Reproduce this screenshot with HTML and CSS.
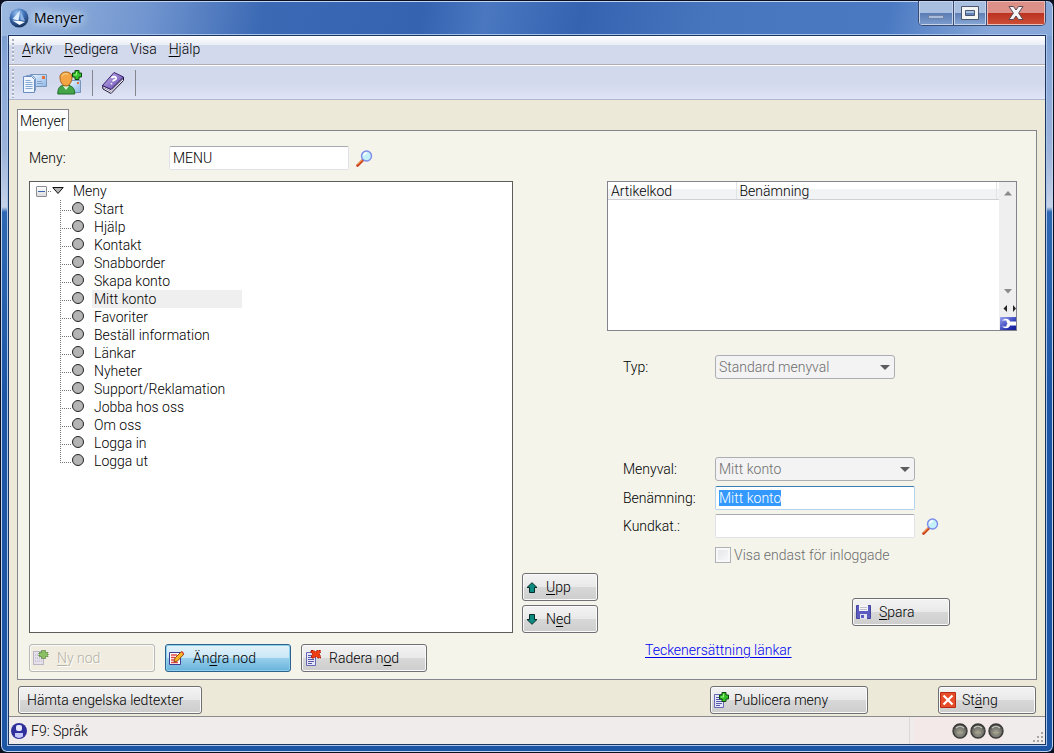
FILE: index.html
```html
<!DOCTYPE html>
<html lang="sv">
<head>
<meta charset="utf-8">
<title>Menyer</title>
<link rel="stylesheet" href="styles.css">
</head>
<body>
<svg class="defs" width="0" height="0" aria-hidden="true">
  <defs>
    <linearGradient id="gBlue" x1="0" y1="0" x2="1" y2="1"><stop offset="0" stop-color="#eaf4ff"/><stop offset="1" stop-color="#8fb8e8"/></linearGradient>
    <radialGradient id="gOrb" cx=".4" cy=".25" r=".8"><stop offset="0" stop-color="#9cc4f0"/><stop offset=".5" stop-color="#3a6cb4"/><stop offset="1" stop-color="#12284e"/></radialGradient>
    <radialGradient id="gLed" cx=".5" cy=".6" r=".6"><stop offset="0" stop-color="#a4a49a"/><stop offset=".6" stop-color="#77776f"/><stop offset="1" stop-color="#3c3c38"/></radialGradient>
    <linearGradient id="gBook" x1="0" y1="0" x2="1" y2="1"><stop offset="0" stop-color="#cdbcf0"/><stop offset="1" stop-color="#5a3da8"/></linearGradient>
    <linearGradient id="gTool" x1="0" y1="0" x2="1" y2="1"><stop offset="0" stop-color="#9aa4f0"/><stop offset=".7" stop-color="#2430b0"/><stop offset="1" stop-color="#141c90"/></linearGradient>
    <symbol id="lens" viewBox="0 0 17 17">
      <path d="M1.500 15.500 7 10" stroke="#c8401c" stroke-width="2.600" stroke-linecap="round"/>
      <path d="M1.500 14.700 6.200 10" stroke="#ffab4c" stroke-width="1"/>
      <circle cx="10.500" cy="6" r="5" fill="#c4f0fa" stroke="#7c8ce8" stroke-width="1.400"/>
      <path d="M8 5.500A3 3 0 0 1 11 3" stroke="#fff" stroke-width="1.600" fill="none"/>
    </symbol>
    <symbol id="plus" viewBox="0 0 10 10">
      <path d="M3 .5h4V3h2.500v4H7v2.500H3V7H.5V3H3z" fill="#35c22b" stroke="#0c4a0c"/>
      <path d="M4.500 2v3H2" stroke="#a4f58c" fill="none"/>
    </symbol>
    <symbol id="sheet" viewBox="0 0 12 14">
      <path d="M.5.5h9v13h-9z" fill="#e6e6fa" stroke="#6868b4"/>
      <path d="M2 3.500h6M2 5.500h6M2 7.500h6M2 9.500h6M2 11.500h4" stroke="#5a5aac"/>
    </symbol>
    <symbol id="led" viewBox="0 0 16 16">
      <circle cx="8" cy="8" r="7" fill="url(#gLed)" stroke="#3a3a38" stroke-width="1.400"/>
      <path d="M4 5A6 6 0 0 1 12 5" stroke="#c8c8c0" stroke-width="1.200" fill="none"/>
      <path d="M5 9.500h6" stroke="#a8a480"/>
    </symbol>
  </defs>
</svg>

<div class="window">
  <header class="titlebar">
    <svg class="app-icon" width="20" height="20" viewBox="0 0 20 20"><circle cx="10" cy="10" r="9.500" fill="url(#gOrb)"/><path d="M11 2.500 3.500 11l6 1.500z" fill="#dfeeff"/><path d="M11.500 2.500v9.500l4.500 1z" fill="#8db4e4"/><path d="M3.500 12.500l7.500.5 5 1-5.500 3z" fill="#f6fbff"/></svg>
    <h1 class="title">Menyer</h1>
    <div class="caption">
      <button class="cap cap-min" aria-label="Minimera"><svg width="18" height="14" viewBox="0 0 18 14"><path d="M1.500 9.500h15v3h-15z" fill="#a9bddd" stroke="#6f83a8"/></svg></button>
      <button class="cap cap-max" aria-label="Maximera"><svg width="18" height="14" viewBox="0 0 18 14"><path fill-rule="evenodd" d="M.5.500h17v13H.5zM4.500 4.500v5h9v-5z" fill="#f4f4f4" stroke="#4a5670"/></svg></button>
      <button class="cap cap-close" aria-label="Stäng fönster"><svg width="16" height="14" viewBox="0 0 16 14"><path d="M1 .5h4.500L8 4 10.500.5H15L10.600 7l4.400 6.500h-4.500L8 10l-2.500 3.500H1L5.400 7z" fill="#f6f6f6" stroke="#5a4a58"/></svg></button>
    </div>
  </header>

  <div class="client">
    <nav class="menubar">
      <button><u>A</u>rkiv</button>
      <button><u>R</u>edigera</button>
      <button>Visa</button>
      <button><u>H</u>jälp</button>
    </nav>
    <div class="toolbar">
      <button aria-label="Kopiera"><svg width="25" height="24" viewBox="0 0 25 24"><path d="M8.500 3.500h16v12h-16z" fill="url(#gBlue)" stroke="#7896bc"/><path d="M20 5h3v3h-3z" fill="#e4703c"/><path d="M15 10.500h5M15 12.500h6" stroke="#88a4c8"/><path d="M4.500 4.500h6l3 3v12h-9z" fill="#cfe0f6" stroke="#7c9cc8"/><path d="M1.500 5.500h8l3 3v13h-11z" fill="#eef5ff" stroke="#6a8cc0"/><path d="M3.500 9.500h5M3.500 11.500h7M3.500 13.500h7M3.500 15.500h7M3.500 17.500h7" stroke="#86a8d4"/></svg></button>
      <button aria-label="Ny kund"><svg width="25" height="25" viewBox="0 0 25 25"><path d="M12.500 10.500h11v12h-11z" fill="url(#gBlue)" stroke="#7896bc"/><path d="M20 12h2v2h-2z" fill="#e4703c"/><path d="M.8 24c0-6 2-8.500 6-8.500h4c4 0 7 2.500 7 8.500z" fill="#43a448" stroke="#1e6c28"/><path d="M6 16l3 4 3-4z" fill="#dff2d8"/><path d="M3 7C3 4 5.500 2 9 2s6 2 6 5c0 5-2.500 9-6 9S3 12 3 7z" fill="#f3a544" stroke="#a8641c"/><path d="M5 6.500C5.500 4 9 3 11 4.500" stroke="#ffe0a0" fill="none"/><use href="#plus" x="15" y="0" width="10" height="10"/></svg></button>
      <span class="tool-sep"></span>
      <button aria-label="Hjälpbok"><svg width="24" height="24" viewBox="0 0 24 24"><path d="M1.500 14.500 2 18l8 4.500L22.500 9.500V6L10 18.500z" fill="#fff" stroke="#1c1238"/><path d="M2.500 16.500 10 20.500 22 8" fill="none" stroke="#8884a0"/><path d="M1.500 14.500 13 1.500 22.500 6 10 18.500z" fill="url(#gBook)" stroke="#38206c"/><path d="M10.500 7.200c1-2.200 5.200-1.800 4.600.4-.5 1.500-2.600 1-3.400 2.900M10.800 12.300l-.6 1" stroke="#fff" stroke-width="1.800" fill="none"/></svg></button>
      <span class="tool-sep"></span>
    </div>

    <main class="content">
      <div class="tabs" role="tablist"><button class="tab" role="tab" aria-selected="true">Menyer</button></div>
      <section class="panel">
        <div class="lookup">
          <label for="meny">Meny:</label>
          <input id="meny" class="field" type="text" value="MENU">
          <button class="lens" aria-label="Sök meny"><svg width="17" height="17"><use href="#lens"/></svg></button>
        </div>

        <div class="tree">
          <div class="root">
            <button class="expander" aria-label="Fäll ihop"></button><span class="dots"></span>
            <svg width="12" height="8" viewBox="0 0 12 8"><path d="M.8.500h10.400L6 6.500z" fill="#b4b4b4" stroke="#111"/></svg>
            <span class="root-label">Meny</span>
          </div>
          <ul class="nodes">
            <li><span>Start</span></li>
            <li><span>Hjälp</span></li>
            <li><span>Kontakt</span></li>
            <li><span>Snabborder</span></li>
            <li><span>Skapa konto</span></li>
            <li><span class="selected">Mitt konto</span></li>
            <li><span>Favoriter</span></li>
            <li><span>Beställ information</span></li>
            <li><span>Länkar</span></li>
            <li><span>Nyheter</span></li>
            <li><span>Support/Reklamation</span></li>
            <li><span>Jobba hos oss</span></li>
            <li><span>Om oss</span></li>
            <li><span>Logga in</span></li>
            <li><span>Logga ut</span></li>
          </ul>
        </div>

        <div class="movers">
          <button class="btn"><svg width="12" height="11" viewBox="0 0 12 11"><path d="M6 .7 11 5.500H8.500v5h-5v-5H1z" fill="#0c8c80" stroke="#042c28"/></svg><span><u>U</u>pp</span></button>
          <button class="btn"><svg width="12" height="11" viewBox="0 0 12 11"><path d="M6 10.300 11 5.500H8.500v-5h-5v5H1z" fill="#0c8c80" stroke="#042c28"/></svg><span>N<u>e</u>d</span></button>
        </div>

        <div class="details">
          <div class="list">
            <table class="articles">
              <thead><tr><th class="col-code">Artikelkod</th><th>Benämning</th><th class="col-end"></th></tr></thead>
            </table>
            <div class="scroller">
              <svg class="arrow" width="8" height="5" viewBox="0 0 8 5"><path d="M4 0 8 4.500H0z" fill="#8a8a8a"/></svg>
              <svg class="arrow arrow-down" width="8" height="5" viewBox="0 0 8 5"><path d="M4 4.500 8 0H0z" fill="#8a8a8a"/></svg>
              <svg class="pager" width="16" height="13" viewBox="0 0 16 13"><path d="M7 2v7L3.500 5.500z" fill="#222"/><path d="M13 2v7l3-3.500z" fill="#222"/></svg>
              <svg width="16" height="13" viewBox="0 0 16 13"><path d="M0 0h16v13H0z" fill="url(#gTool)"/><path d="M2 3.500C5 .8 9 1.500 10 4.500h6v4h-6c-1 3-5 3.700-8 1h4.500V8l1-1.500-1-1.500V3.500z" fill="#fff"/></svg>
            </div>
          </div>

          <div class="form">
            <div class="row row-type">
              <label for="typ">Typ:</label>
              <span class="select narrow"><select id="typ" disabled><option>Standard menyval</option></select></span>
            </div>
            <div class="row row-choice">
              <label for="menyval">Menyval:</label>
              <span class="select"><select id="menyval" disabled><option>Mitt konto</option></select></span>
            </div>
            <div class="row">
              <label for="benamning">Benämning:</label>
              <input id="benamning" class="field active" type="text" value="Mitt konto">
            </div>
            <div class="row">
              <label for="kundkat">Kundkat.:</label>
              <input id="kundkat" class="field" type="text">
              <button class="lens" aria-label="Sök kundkategori"><svg width="17" height="17"><use href="#lens"/></svg></button>
            </div>
            <div class="row row-check">
              <input id="inloggade" type="checkbox" disabled><label for="inloggade">Visa endast för inloggade</label>
            </div>
          </div>
          <button class="btn save"><svg width="15" height="15" viewBox="0 0 15 15"><path d="M.5.500h14v13h-14z" fill="#5c5cc0" stroke="#46469c"/><path d="M3 0h9v6H3z" fill="#f4f4fa"/><path d="M4 2.500h7M4 4.500h7" stroke="#c0c0c8"/><path d="M4 9h7v5H4z" fill="#e4e4f0"/><path d="M5 10h3v3H5z" fill="#5c5cc0"/></svg><span><u>S</u>para</span></button>
        </div>

        <div class="node-actions">
          <button class="btn ghost" disabled><svg width="16" height="16" viewBox="0 0 16 16"><path d="M.5 1.500h10v13H.5z" fill="#e4e0ec" stroke="#8c84a0" stroke-dasharray="1 1"/><path d="M2 5h7M2 8h7M2 11h7" stroke="#b4b0b8" stroke-dasharray="1 1"/><path d="M8.500.500h4v2h2.500v4h-2.500v2h-4v-2H6v-4h2.500z" fill="#8cc064" stroke="#3c6c28" stroke-dasharray="1 1"/></svg><span><u>N</u>y nod</span></button>
          <button class="btn default"><svg width="16" height="16" viewBox="0 0 16 16"><path d="M.5 2.500h11v12H.5z" fill="#fff" stroke="#3c3c94"/><path d="M2 5h6M2 7.500h4M2 10h3M2 12.500h7" stroke="#e04848" stroke-width="1.500"/><path d="M5 12l1-4 6.500-6.500 2.500 2.500L8.500 11z" fill="#ffb428" stroke="#8c4c10"/><path d="M12 2l1-1 2.200 2.200-1 1z" fill="#e04040"/></svg><span>Än<u>d</u>ra nod</span></button>
          <button class="btn"><svg width="16" height="16" viewBox="0 0 16 16"><use href="#sheet" x="1" y="2" width="12" height="14"/><path d="M6 .5h3l1.500 1.500L12 .5h3.500v2L14 4l1.500 2v2H13l-2-1.500L9 8H6.500V6L8 4 6 2.500z" fill="#f03c10" stroke="#a01808" stroke-dasharray="2 1"/></svg><span>Radera n<u>o</u>d</span></button>
        </div>
        <p class="link-line"><a href="#lankar">Teckenersättning länkar</a></p>
      </section>

      <footer class="actions">
        <button class="btn texts">Hämta engelska ledtexter</button>
        <button class="btn publish"><svg width="15" height="16" viewBox="0 0 15 16"><use href="#sheet" x="0" y="2" width="12" height="14"/><use href="#plus" x="5" y="0" width="10" height="10"/></svg><span>Publicera meny</span></button>
        <button class="btn close"><svg width="16" height="16" viewBox="0 0 16 16"><path d="M.5.500h15v15H.5z" fill="#e84c28" stroke="#b42c14"/><path d="M3.500 3.500l9 9M12.500 3.500l-9 9" stroke="#fff" stroke-width="2.200"/></svg><span>St<u>ä</u>ng</span></button>
      </footer>
    </main>

    <div class="statusbar">
      <svg width="16" height="16" viewBox="0 0 16 16"><circle cx="8" cy="8" r="8" fill="#30309c"/><rect x="5" y="2" width="6" height="6" rx="2" fill="#e8e8ff"/><path d="M4 13.500V10h8v3.500a7 7 0 0 1-8 0z" fill="#c4c8f8"/></svg>
      <span class="status-text">F9: Språk</span>
      <span class="leds"><svg width="16" height="16"><use href="#led"/></svg><svg width="16" height="16"><use href="#led"/></svg><svg width="16" height="16"><use href="#led"/></svg></span>
      <svg class="grip" width="12" height="12" viewBox="0 0 12 12"><path d="M8 0h2v2H8zM4 4h2v2H4zM8 4h2v2H8zM0 8h2v2H0zM4 8h2v2H4zM8 8h2v2H8z" fill="#a8a4a0"/></svg>
    </div>
  </div>
</div>
<script src="app.js"></script>
</body>
</html>
```
FILE: styles.css
```css
* { box-sizing: border-box; }

body {
  margin: 0;
  background: #0a1020;
  font: 14px/18px Roboto, "Liberation Sans", sans-serif;
  font-weight: 300;
  color: #000;
}

button, input, select { font: inherit; color: inherit; margin: 0; }
button { padding: 0; border: 0; background: none; }
svg { display: block; flex: none; }
.defs { position: absolute; }
u { text-underline-offset: 2px; text-decoration-thickness: 1px; }

.window {
  min-height: 100vh;
  display: flex;
  flex-direction: column;
  padding: 0 7px 7px;
  border: 1px solid #0a1020;
  border-radius: 7px;
  box-shadow: inset 0 0 0 1px #bfd4f0;
  background:
    linear-gradient(100deg, #9cb9e0 0, #7195cf 14%, #3b69b4 25%, #3563b0 40%, #4a77c0 46%, #3563b0 55%, #4876be 68%, #4a79c2 84%, #86a7d8 94%) 0 0 / 100% 35px no-repeat,
    linear-gradient(#6e95cc 0, #8aa8d8 70px, #9db4da 150px, #c6d2e8 206px, #2f68b2 211px, #1c55a4 400px, #1c55a4 100%);
}

.titlebar { height: 34px; display: flex; align-items: center; }
.app-icon { margin-left: 1px; }
.title {
  margin: 0 0 0 5px;
  font: 400 14px/20px "Open Sans", "Noto Sans", sans-serif;
  text-shadow: 0 0 6px #d8e6f8, 0 0 10px #d8e6f8, 0 0 14px #d8e6f8;
}
.caption { display: flex; align-self: flex-start; margin-left: auto; border: 1px solid #3c4c70; border-top: 0; border-radius: 0 0 5px 5px; overflow: hidden; }
.cap {
  height: 24px;
  width: 35px;
  display: grid;
  place-items: center;
  border-right: 1px solid #3c4c70;
  box-shadow: inset 0 0 0 1px #c4d4ec;
  background: linear-gradient(#a9bfe0 50%, #5a7cb4 50%, #7c9ccc);
}
.cap-max { width: 33px; background: linear-gradient(#a9bfe0 50%, #5f7fb5 50%, #88a8d6); }
.cap-close { width: 58px; border-right: 0; box-shadow: inset 0 0 0 1px #eebcb4; background: linear-gradient(#dc9088 50%, #bc3220 50%, #cc5038); }

.client {
  flex: 1;
  display: flex;
  flex-direction: column;
  border: 1px solid #1c3560;
  box-shadow: 0 0 0 1px #a8c4ea;
  background: #ece9d8;
}

.menubar, .toolbar { position: relative; display: flex; align-items: center; }
.menubar {
  height: 29px;
  gap: 12px;
  padding: 0 13px 3px;
  border-bottom: 1px solid #b0acb4;
  background: linear-gradient(#fff, #e9edf6 9px, #d3d9ec 9px);
}
.toolbar {
  height: 35px;
  padding-left: 13px;
  gap: 10px;
  border-top: 1px solid #fff;
  border-bottom: 1px solid #b4b8cc;
  background: linear-gradient(#d3d9ec 55%, #dfe5f6);
}
.menubar::before, .toolbar::before {
  content: "";
  position: absolute;
  left: 3px;
  top: 3px;
  bottom: 1px;
  width: 2px;
  background: repeating-linear-gradient(#aab0c4 0 2px, #f4f6fc 2px 3px, transparent 3px 4px);
}
.tool-sep { width: 1px; height: 26px; background: #84868e; }
.toolbar button:nth-of-type(3) { margin-left: -2px; }

.content { flex: 1; display: flex; flex-direction: column; padding: 9px 8px 2px; }
.tabs { display: flex; position: relative; }
.tab {
  height: 22px;
  margin-bottom: -1px;
  padding: 0 2px;
  border: 1px solid #84848c;
  border-bottom: 0;
  background: #fff;
}
.panel {
  flex: 1;
  display: grid;
  grid-template-columns: minmax(0, 484fr) 76px minmax(0, 410fr);
  grid-template-rows: auto 1fr auto;
  gap: 11px 9px;
  padding: 15px 19px 7px 11px;
  border: 1px solid #84848c;
  background: #f4f4eb;
}
.lookup { grid-column: 1 / 4; display: flex; align-items: center; }
.lookup label { width: 140px; }
.field {
  width: 200px;
  height: 24px;
  padding: 0 3px;
  border: 1px solid #e0e2e8;
  border-top-color: #a8aab0;
  border-radius: 2px;
  background: #fff;
  outline: 0;
}
.lookup .field { width: 180px; }
.field.active { border-color: #b4d4ee; border-top-color: #3c7cb4; }
.field::selection { background: #3399ff; color: #fff; }
.lens { margin-left: 7px; }

.tree { border: 1px solid #5c5c58; background: #fff; }
.root { display: flex; align-items: center; height: 18px; padding-left: 6px; }
.expander {
  width: 11px;
  height: 11px;
  border: 1px solid #8c8c94;
  border-radius: 1px;
  background: linear-gradient(#3c64b4, #3c64b4) center / 7px 1px no-repeat, linear-gradient(#fff, #dcdcdc);
}
.dots { width: 5px; height: 1px; background: repeating-linear-gradient(90deg, transparent 0 1px, #777 1px 2px); }
.root-label { margin-left: 9px; }
.nodes { margin: 0 0 0 30px; padding: 0; list-style: none; }
.nodes li {
  display: flex;
  align-items: center;
  height: 18px;
  background:
    repeating-linear-gradient(#777 0 1px, transparent 1px 2px) 0 0 / 1px 100% no-repeat,
    repeating-linear-gradient(90deg, #777 0 1px, transparent 1px 2px) 0 10px / 11px 1px no-repeat;
}
.nodes li:last-child { background-size: 1px 11px, 11px 1px; }
.nodes li::before {
  content: "";
  width: 10px;
  height: 10px;
  margin: 0 8px 2px 12px;
  border: 1px solid #222;
  border-radius: 50%;
  background: #b4b4b4;
}
.nodes span { padding: 0 2px; }
.nodes .selected { width: 150px; background: #efefef; }

.movers { display: flex; flex-direction: column; justify-content: flex-end; gap: 4px; }

.btn {
  height: 28px;
  display: flex;
  align-items: center;
  gap: 8px;
  padding: 0 3px;
  border: 1px solid #707074;
  border-radius: 3px;
  box-shadow: inset 0 0 0 1px #fafafa;
  background: linear-gradient(#f3f3f3, #e9e9e9 50%, #d8d8d8 50%, #cdcdcd);
}
.btn.default { border-color: #2c628b; box-shadow: inset 0 0 0 1px #8cd0ee; background: linear-gradient(#e4f3fb, #c8e6f6 50%, #98d0ec 50%, #68b2da); }
.btn.ghost { color: #b4b2a4; border-color: #b8b8b4; background: #f0ece0; text-shadow: 1px 1px 0 #fff; }

.details { display: flex; flex-direction: column; align-items: stretch; }
.list { height: 150px; display: flex; border: 1px solid #84848c; background: #fff; }
.articles { flex: 1; align-self: flex-start; border-collapse: collapse; table-layout: fixed; }
.articles th {
  height: 17px;
  padding: 1px 3px 0;
  font-weight: inherit;
  line-height: 16px;
  text-align: left;
  border-right: 1px solid #e2e4e6;
  border-bottom: 1px solid #d0d0d4;
  background: linear-gradient(#fff 40%, #f2f3f5 41%);
}
.articles .col-code { width: 128px; }
.articles .col-end { width: 3px; padding: 0; border-right: 0; }
.scroller { width: 17px; display: flex; flex-direction: column; align-items: flex-end; background: #efefef; }
.arrow { margin: 9px 4px 0 0; }
.arrow-down { margin: auto 4px 9px 0; }
.pager { margin-bottom: 1px; }

.form { display: flex; flex-direction: column; gap: 4px; padding: 24px 0 0 16px; }
.row { display: flex; align-items: center; }
.row label { width: 92px; }
.row-type { margin-bottom: 74px; }
.row-choice { margin-bottom: 1px; }
.select { position: relative; width: 200px; }
.select.narrow { width: 180px; }
.select select {
  display: block;
  width: 100%;
  height: 24px;
  padding: 0 3px;
  appearance: none;
  border: 1px solid #acaeb4;
  border-radius: 3px;
  background: #f3f3f3;
  color: #6d6d6d;
  opacity: 1;
}
.select::after {
  content: "";
  position: absolute;
  right: 5px;
  top: 10px;
  border: 5px solid transparent;
  border-top-color: #5c5c60;
  border-bottom: 0;
}
.row-check { padding: 5px 0 0 92px; color: #6d6d6d; }
.row-check label { width: auto; margin-left: 3px; line-height: 16px; }
.row-check input {
  appearance: none;
  width: 16px;
  height: 16px;
  border: 1px solid #b0b2b8;
  box-shadow: inset 0 0 0 2px #f8f8f8;
  background: linear-gradient(135deg, #e2e4e8, #fafafa);
}
.save { width: 98px; margin: auto 67px 7px auto; }

.node-actions { grid-column: 1 / 3; display: flex; gap: 10px; }
.node-actions .btn { width: 126px; }
.link-line { margin: 0; padding: 0 38px; line-height: 12px; }
.link-line a { color: #0000f0; text-underline-offset: 2px; }

.actions { display: flex; margin-top: 6px; gap: 70px; padding: 0 1px; }
.texts { width: 184px; padding: 0 8px; margin-right: auto; }
.publish { width: 158px; gap: 5px; }
.close { width: 98px; gap: 6px; padding: 0 1px; }

.statusbar {
  height: 28px;
  display: flex;
  align-items: center;
  padding-left: 2px;
  border-top: 1px solid #8c8c8c;
  background: #f0eceb;
}
.status-text { margin-left: 4px; }
.leds { display: flex; align-self: stretch; align-items: center; gap: 2px; margin-left: auto; padding: 0 29px 0 42px; border-left: 1px solid #dcd8d6; background: linear-gradient(90deg, transparent 4px, #f3e9e9 4px, #f3e9e9 92px, transparent 92px); }
.grip { align-self: flex-end; }
```
FILE: app.js
```js
const nameField = document.getElementById("benamning");
nameField.focus();
nameField.select();
```
